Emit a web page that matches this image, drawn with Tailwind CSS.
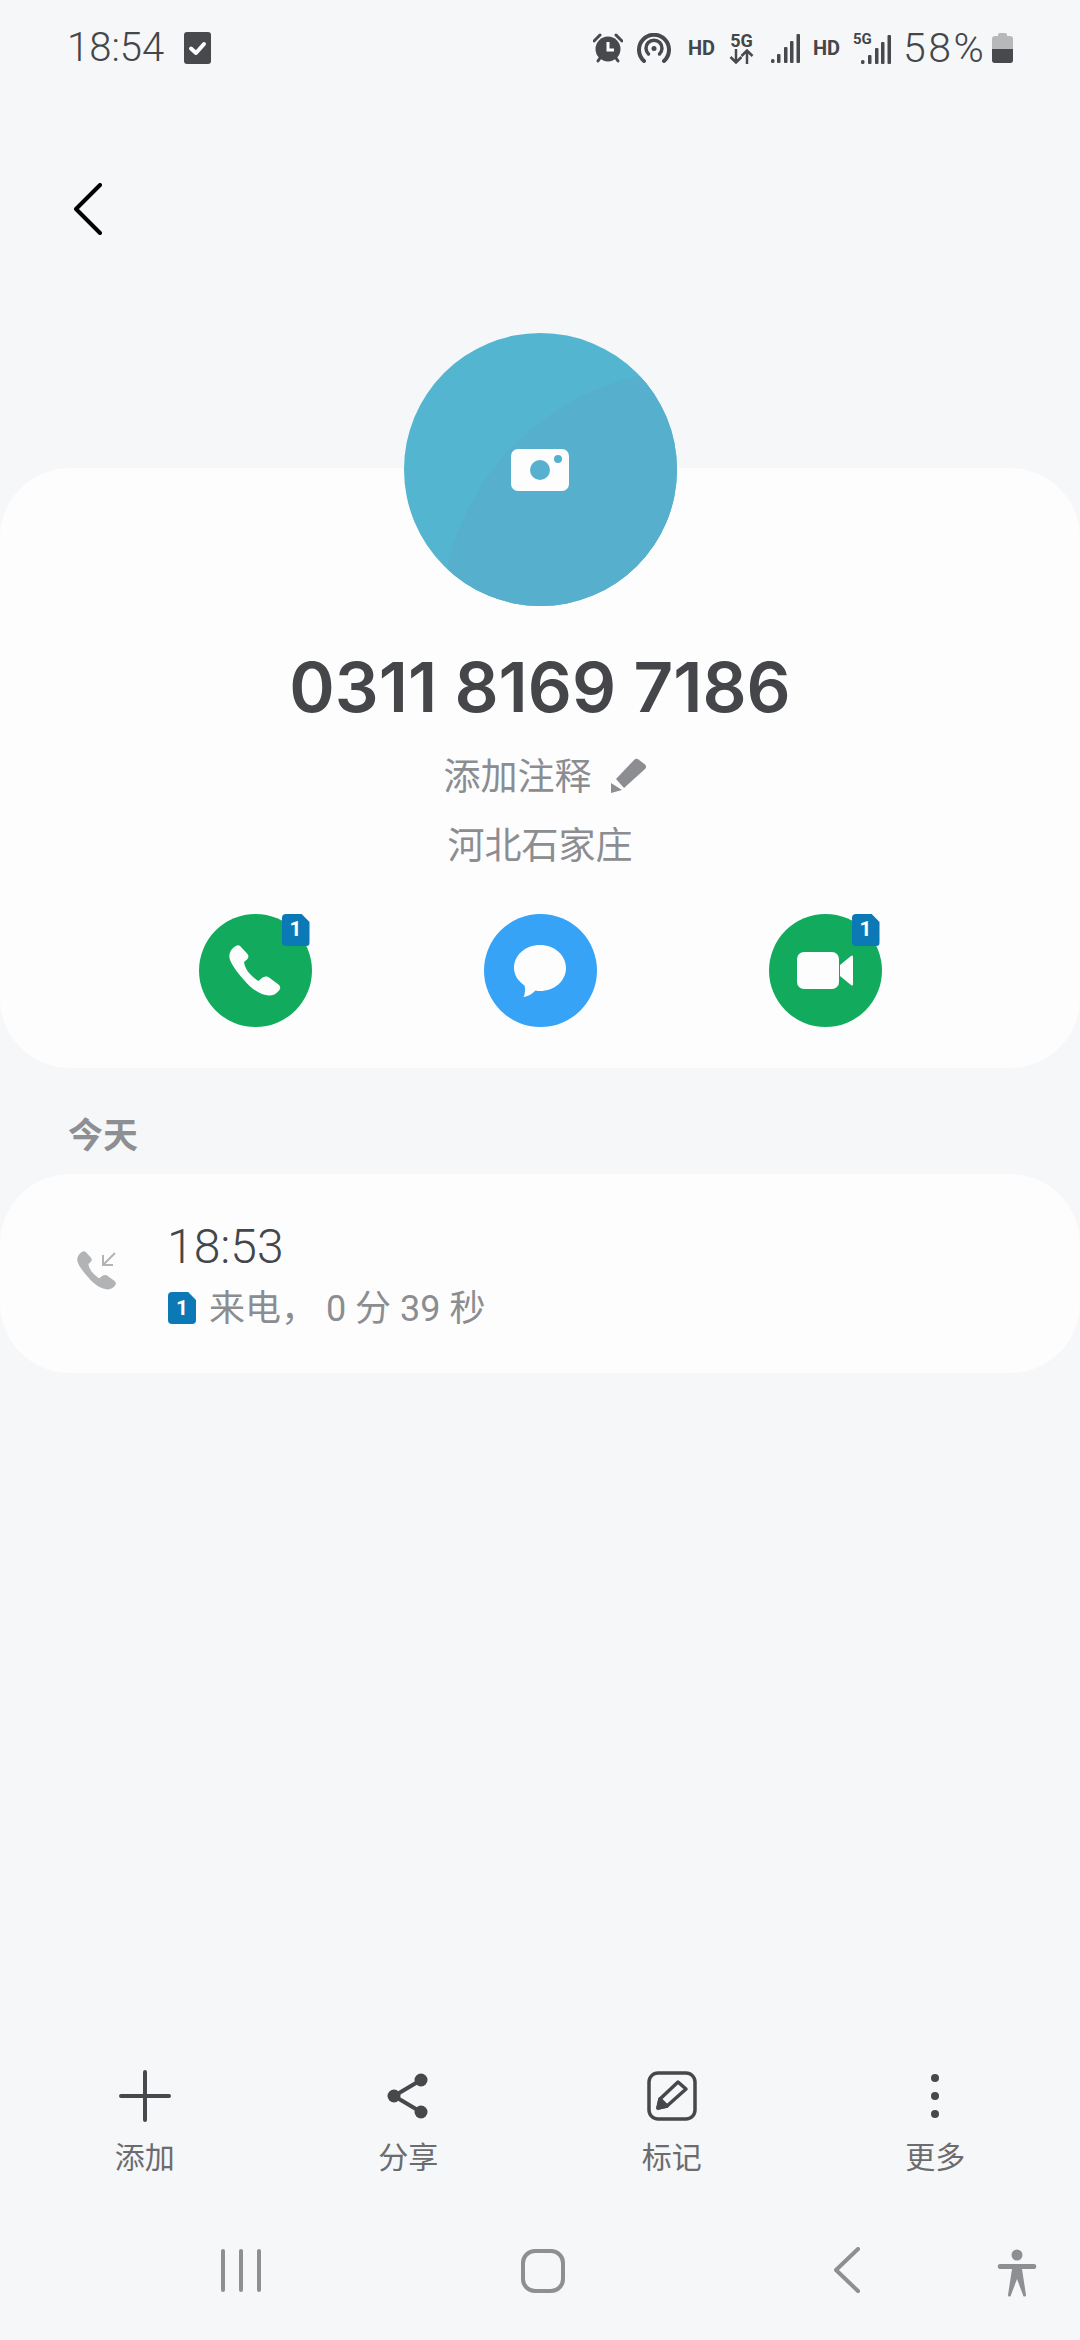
<!DOCTYPE html>
<html lang="zh-CN">
	<head>
		<meta charset="UTF-8" />
		<meta name="viewport" content="width=device-width, initial-scale=1.0" />
		<script src="https://cdn.jsdelivr.net/npm/@tailwindcss/browser@4"></script>
	</head>
	<body class="bg-[#f6f7f9]">
		<div class="w-[1080px] h-[2340px] flex flex-col overflow-hidden font-['Roboto','Noto_Sans_CJK_SC',sans-serif] text-[#444649]">
			<!-- Status bar -->
			<div class="h-[96px] flex items-center pl-[67px] pr-[67px]">
				<span class="text-[40px] leading-none font-[350]">18:54</span>
				<div class="ml-[20px] w-[27px] h-[32px] rounded-[3px] bg-[#47494c] flex items-center justify-center">
					<svg width="19" height="15" viewBox="0 0 19 15" fill="none" stroke="#fff" stroke-width="4" stroke-linecap="round" stroke-linejoin="round"><path d="M3 7.5 8 12 16 3" /></svg>
				</div>
				<div class="ml-auto flex items-center">
					<svg width="30" height="30" viewBox="0 0 30 30" class="mr-[14px]">
						<circle cx="15" cy="16" r="12.5" fill="#47494c" />
						<path d="M1 8 7 2M23 2l6 6M5 28l2-3M25 28l-2-3" stroke="#47494c" stroke-width="3" stroke-linecap="round" />
						<path d="M15 9v8h6" fill="none" stroke="#fff" stroke-width="3" />
					</svg>
					<svg width="34" height="30" viewBox="0 0 34 30" fill="none" stroke="#47494c" stroke-width="4" stroke-linecap="round" class="mr-[17px]">
						<path d="M7 28a15 15 0 1 1 20 0" />
						<path d="M11.500 21a8 8 0 1 1 11 0" stroke-width="3.500" />
						<circle cx="17" cy="15.500" r="2.500" fill="#47494c" stroke="none" />
					</svg>
					<span class="w-[26px] mr-[15px] text-[20px] font-bold leading-none text-center">HD</span>
					<div class="w-[25px] mr-[17px] flex flex-col items-center">
						<span class="text-[18px] font-bold leading-[16px]">5G</span>
						<svg width="25" height="15" viewBox="0 0 25 15" fill="none" stroke="#47494c" stroke-width="2.500"><path d="M7 0v13M1.500 8 7 13.500 12.500 8M18 15V2M12.500 7 18 1.500 23.500 7" /></svg>
					</div>
					<svg width="29" height="29" viewBox="0 0 29 29" fill="#47494c" class="mr-[13px]">
						<rect x="0" y="25" width="3.500" height="4" rx="1.500" />
						<rect x="6" y="20" width="3.500" height="9" rx="1" />
						<rect x="13" y="13" width="3.500" height="16" rx="1" />
						<rect x="19" y="7" width="3.500" height="22" rx="1" />
						<rect x="25.500" y="0" width="3.500" height="29" rx="1" />
					</svg>
					<span class="w-[26px] mr-[14px] text-[20px] font-bold leading-none text-center">HD</span>
					<div class="relative w-[38px] h-[32px] mr-[12px]">
						<span class="absolute left-0 top-0 text-[15px] font-bold leading-none">5G</span>
						<svg width="30" height="29" viewBox="0 0 30 29" fill="#47494c" class="absolute right-0 bottom-0">
							<rect x="0" y="25" width="3.500" height="4" rx="1.500" />
							<rect x="7" y="20" width="3.500" height="9" rx="1" />
							<rect x="14" y="13" width="3.500" height="16" rx="1" />
							<rect x="20" y="7" width="3.500" height="22" rx="1" />
							<rect x="26.500" y="0" width="3.500" height="29" rx="1" />
						</svg>
					</div>
					<span class="w-[82px] text-[41px] leading-none mr-[7px] font-[350] tracking-[2.5px] whitespace-nowrap">58%</span>
					<div class="w-[21px] h-[30px] relative">
						<div class="absolute left-[6px] top-0 w-[9px] h-[3px] rounded-t-[2px] bg-[#b7b8ba]"></div>
						<div class="absolute left-0 right-0 top-[3px] bottom-0 rounded-[3px] overflow-hidden bg-[#b7b8ba] flex flex-col justify-end">
							<div class="h-[14px] bg-[#47494c]"></div>
						</div>
					</div>
				</div>
			</div>

			<!-- Back -->
			<div class="h-[372px] pl-[74px] pt-[87px]">
				<svg width="28" height="52" viewBox="0 0 28 52" fill="none" stroke="#000" stroke-width="4" stroke-linecap="round" stroke-linejoin="round"><path d="M26 2 2 26l24 24" /></svg>
			</div>

			<!-- Contact card -->
			<div class="h-[600px] rounded-[70px] bg-[#fdfdfe] flex flex-col items-center">
				<div class="relative -mt-[135px] w-[273px] h-[273px] rounded-full overflow-hidden bg-[#53b5d0] flex items-center justify-center">
					<div class="absolute left-[37px] top-[37px] w-[506px] h-[506px] rounded-full bg-[#56afcc]"></div>
					<svg width="58" height="42" viewBox="0 0 58 42" class="relative">
						<rect width="58" height="42" rx="7" fill="#fdfdfe" />
						<circle cx="29" cy="21" r="10" fill="#57b1ce" />
						<circle cx="47" cy="10" r="4" fill="#57b1ce" />
					</svg>
				</div>
				<div class="mt-[43px] font-['Inter'] text-[69px] leading-[76px] font-semibold">0311 8169 7186</div>
				<div class="mt-[28px] pl-[10px] h-[50px] flex items-center text-[37px] text-[#8b8d90]">
					<span>添加注释</span>
					<svg width="36" height="36" viewBox="0 0 36 36" fill="#8b8d90" class="ml-[19px] -mt-[4px]">
						<path d="M23 2C24.500 .5 26 .5 27.500 1.500L34 6.500C35.500 8 35.500 9.500 34 11L13 30 5 21Z" />
						<path d="M0 35V25L11 32Z" />
					</svg>
				</div>
				<div class="mt-[19px] text-[37px] leading-[50px] text-[#8b8d90]">河北石家庄</div>
				<div class="mt-[42px] w-[683px] flex justify-between">
					<div class="relative w-[113px] h-[113px] rounded-full bg-[#12ab5e] flex items-center justify-center">
						<svg width="52" height="51" viewBox="0 0 52 51" fill="#fdfdfe"><path d="M8 .5C10 0 11 1 12 2L18.500 9C20 11 19.500 13 18 14.500L15 17C15.500 21 18 26 21 29C24 32 27 35 29.500 36L33 33C35.500 31 38.500 31 40 32.500L49.500 39.500C52 42 51.500 44 49.500 46C47 49 44 50.500 40 50.500C33 50.500 23 45 15 35C7 26 1.500 18 .5 13C-.5 8 3 2.500 8 .5Z" /></svg>
						<div class="absolute left-[83px] top-0 w-[28px] h-[32px] rounded-[4px] bg-[#0a79b5] text-white text-[21px] font-bold flex items-center justify-center [clip-path:polygon(0_0,72%_0,100%_25%,100%_100%,0_100%)]">1</div>
					</div>
					<div class="w-[113px] h-[113px] rounded-full bg-[#36a3f7] flex items-center justify-center">
						<svg width="52" height="52" viewBox="0 0 52 52" fill="#fdfdfe"><path d="M26 0C40.500 0 52 10 52 23C52 36 40.500 46 26 46C24.500 46 23 46 21.500 45.500C18 49 13.500 51.500 10 52C9.500 52 9.500 51.500 10 51C11 48 11.500 44 10.500 40.500C4 36 0 30 0 23C0 10 11.500 0 26 0Z" /></svg>
					</div>
					<div class="relative w-[113px] h-[113px] rounded-full bg-[#12ab5e] flex items-center justify-center">
						<svg width="56" height="37" viewBox="0 0 56 37" fill="#fdfdfe"><rect width="42" height="37" rx="7" /><path d="M43 13 54 4C55 3 56 3.500 56 5V32C56 33.500 55 34 54 33L43 24Z" /></svg>
						<div class="absolute left-[83px] top-0 w-[28px] h-[32px] rounded-[4px] bg-[#0a79b5] text-white text-[21px] font-bold flex items-center justify-center [clip-path:polygon(0_0,72%_0,100%_25%,100%_100%,0_100%)]">1</div>
					</div>
				</div>
			</div>

			<!-- Call log -->
			<div class="h-[106px] pl-[68px] pt-[47px] text-[35px] leading-[44px] font-semibold text-[#8d8f92]">今天</div>
			<div class="h-[199px] rounded-[70px] bg-[#fdfdfe] flex items-center pl-[77px]">
				<svg width="40" height="39" viewBox="0 0 40 39" class="-mt-[6px]">
					<path transform="scale(.76)" fill="#b2b3b5" d="M8 .5C10 0 11 1 12 2L18.500 9C20 11 19.500 13 18 14.500L15 17C15.500 21 18 26 21 29C24 32 27 35 29.500 36L33 33C35.500 31 38.500 31 40 32.500L49.500 39.500C52 42 51.500 44 49.500 46C47 49 44 50.500 40 50.500C33 50.500 23 45 15 35C7 26 1.500 18 .5 13C-.5 8 3 2.500 8 .5Z" />
					<path d="M38 2 26 14M26 4V14H36" fill="none" stroke="#b2b3b5" stroke-width="2" />
				</svg>
				<div class="ml-[50px] mt-[4px]">
					<div class="text-[48px] leading-[54px] font-[350]">18:53</div>
					<div class="mt-[13px] pl-[1px] flex items-center text-[36px] leading-[44px] text-[#8b8d90]">
						<div class="w-[28px] h-[32px] -mt-[2px] rounded-[4px] bg-[#0a79b5] text-white text-[21px] font-bold flex items-center justify-center [clip-path:polygon(0_0,72%_0,100%_25%,100%_100%,0_100%)]">1</div>
						<span class="ml-[13px]">来电， 0 分 39 秒</span>
					</div>
				</div>
			</div>

			<!-- Bottom toolbar -->
			<div class="mt-auto grid grid-cols-4 px-[13px]">
				<div class="flex flex-col items-center">
					<div class="h-[60px] flex items-center justify-center">
						<svg width="52" height="52" viewBox="0 0 52 52" stroke="#46484b" stroke-width="4" stroke-linecap="round"><path d="M26 2v48M2 26h48" /></svg>
					</div>
					<span class="mt-[12px] text-[30px] leading-[40px] text-[#6a6c6f]">添加</span>
				</div>
				<div class="flex flex-col items-center">
					<div class="h-[60px] flex items-center justify-center">
						<svg width="42" height="46" viewBox="0 0 42 46" fill="#46484b">
							<path d="M34 7 7 23 34 39" fill="none" stroke="#46484b" stroke-width="4" />
							<circle cx="34" cy="7" r="6.500" />
							<circle cx="7" cy="23" r="6.500" />
							<circle cx="34" cy="39" r="6.500" />
						</svg>
					</div>
					<span class="mt-[12px] text-[30px] leading-[40px] text-[#6a6c6f]">分享</span>
				</div>
				<div class="flex flex-col items-center">
					<div class="h-[60px] flex items-center justify-center">
						<svg width="50" height="50" viewBox="0 0 50 50" fill="none" stroke="#46484b" stroke-width="3.500" stroke-linejoin="round">
							<rect x="2" y="2" width="46" height="46" rx="9" />
							<path d="M31 11 39 18 20 35 11 37 13 28Z" />
							<path d="M11 37 13 28 20 35Z" fill="#46484b" />
						</svg>
					</div>
					<span class="mt-[12px] text-[30px] leading-[40px] text-[#6a6c6f]">标记</span>
				</div>
				<div class="flex flex-col items-center">
					<div class="h-[60px] flex flex-col items-center justify-center gap-[10px]">
						<div class="w-[8px] h-[8px] rounded-full bg-[#46484b]"></div>
						<div class="w-[8px] h-[8px] rounded-full bg-[#46484b]"></div>
						<div class="w-[8px] h-[8px] rounded-full bg-[#46484b]"></div>
					</div>
					<span class="mt-[12px] text-[30px] leading-[40px] text-[#6a6c6f]">更多</span>
				</div>
			</div>

			<!-- Navigation bar -->
			<div class="h-[158px] mt-[4px] relative">
				<div class="absolute left-[221px] top-[67px] flex gap-[14px]">
					<div class="w-[4px] h-[43px] rounded-full bg-[#8e8f92]"></div>
					<div class="w-[4px] h-[43px] rounded-full bg-[#8e8f92]"></div>
					<div class="w-[4px] h-[43px] rounded-full bg-[#8e8f92]"></div>
				</div>
				<div class="absolute left-[521px] top-[67px] w-[44px] h-[44px] rounded-[14px] border-[4px] border-[#8e8f92]"></div>
				<svg width="26" height="46" viewBox="0 0 26 46" fill="none" stroke="#8e8f92" stroke-width="4" stroke-linecap="round" stroke-linejoin="round" class="absolute left-[834px] top-[65px]"><path d="M24 2 2 23l22 21" /></svg>
				<svg width="40" height="48" viewBox="0 0 40 48" fill="#8e8f92" class="absolute left-[997px] top-[67px]">
					<circle cx="20" cy="6" r="5.500" />
					<path d="M3 15H37C40 15 40 20 37 20H25L29 46C29 48 26 48 26 46L20 30 14 46C14 48 11 48 11 46L15 20H3C0 20 0 15 3 15Z" />
				</svg>
			</div>
		</div>
	</body>
</html>
